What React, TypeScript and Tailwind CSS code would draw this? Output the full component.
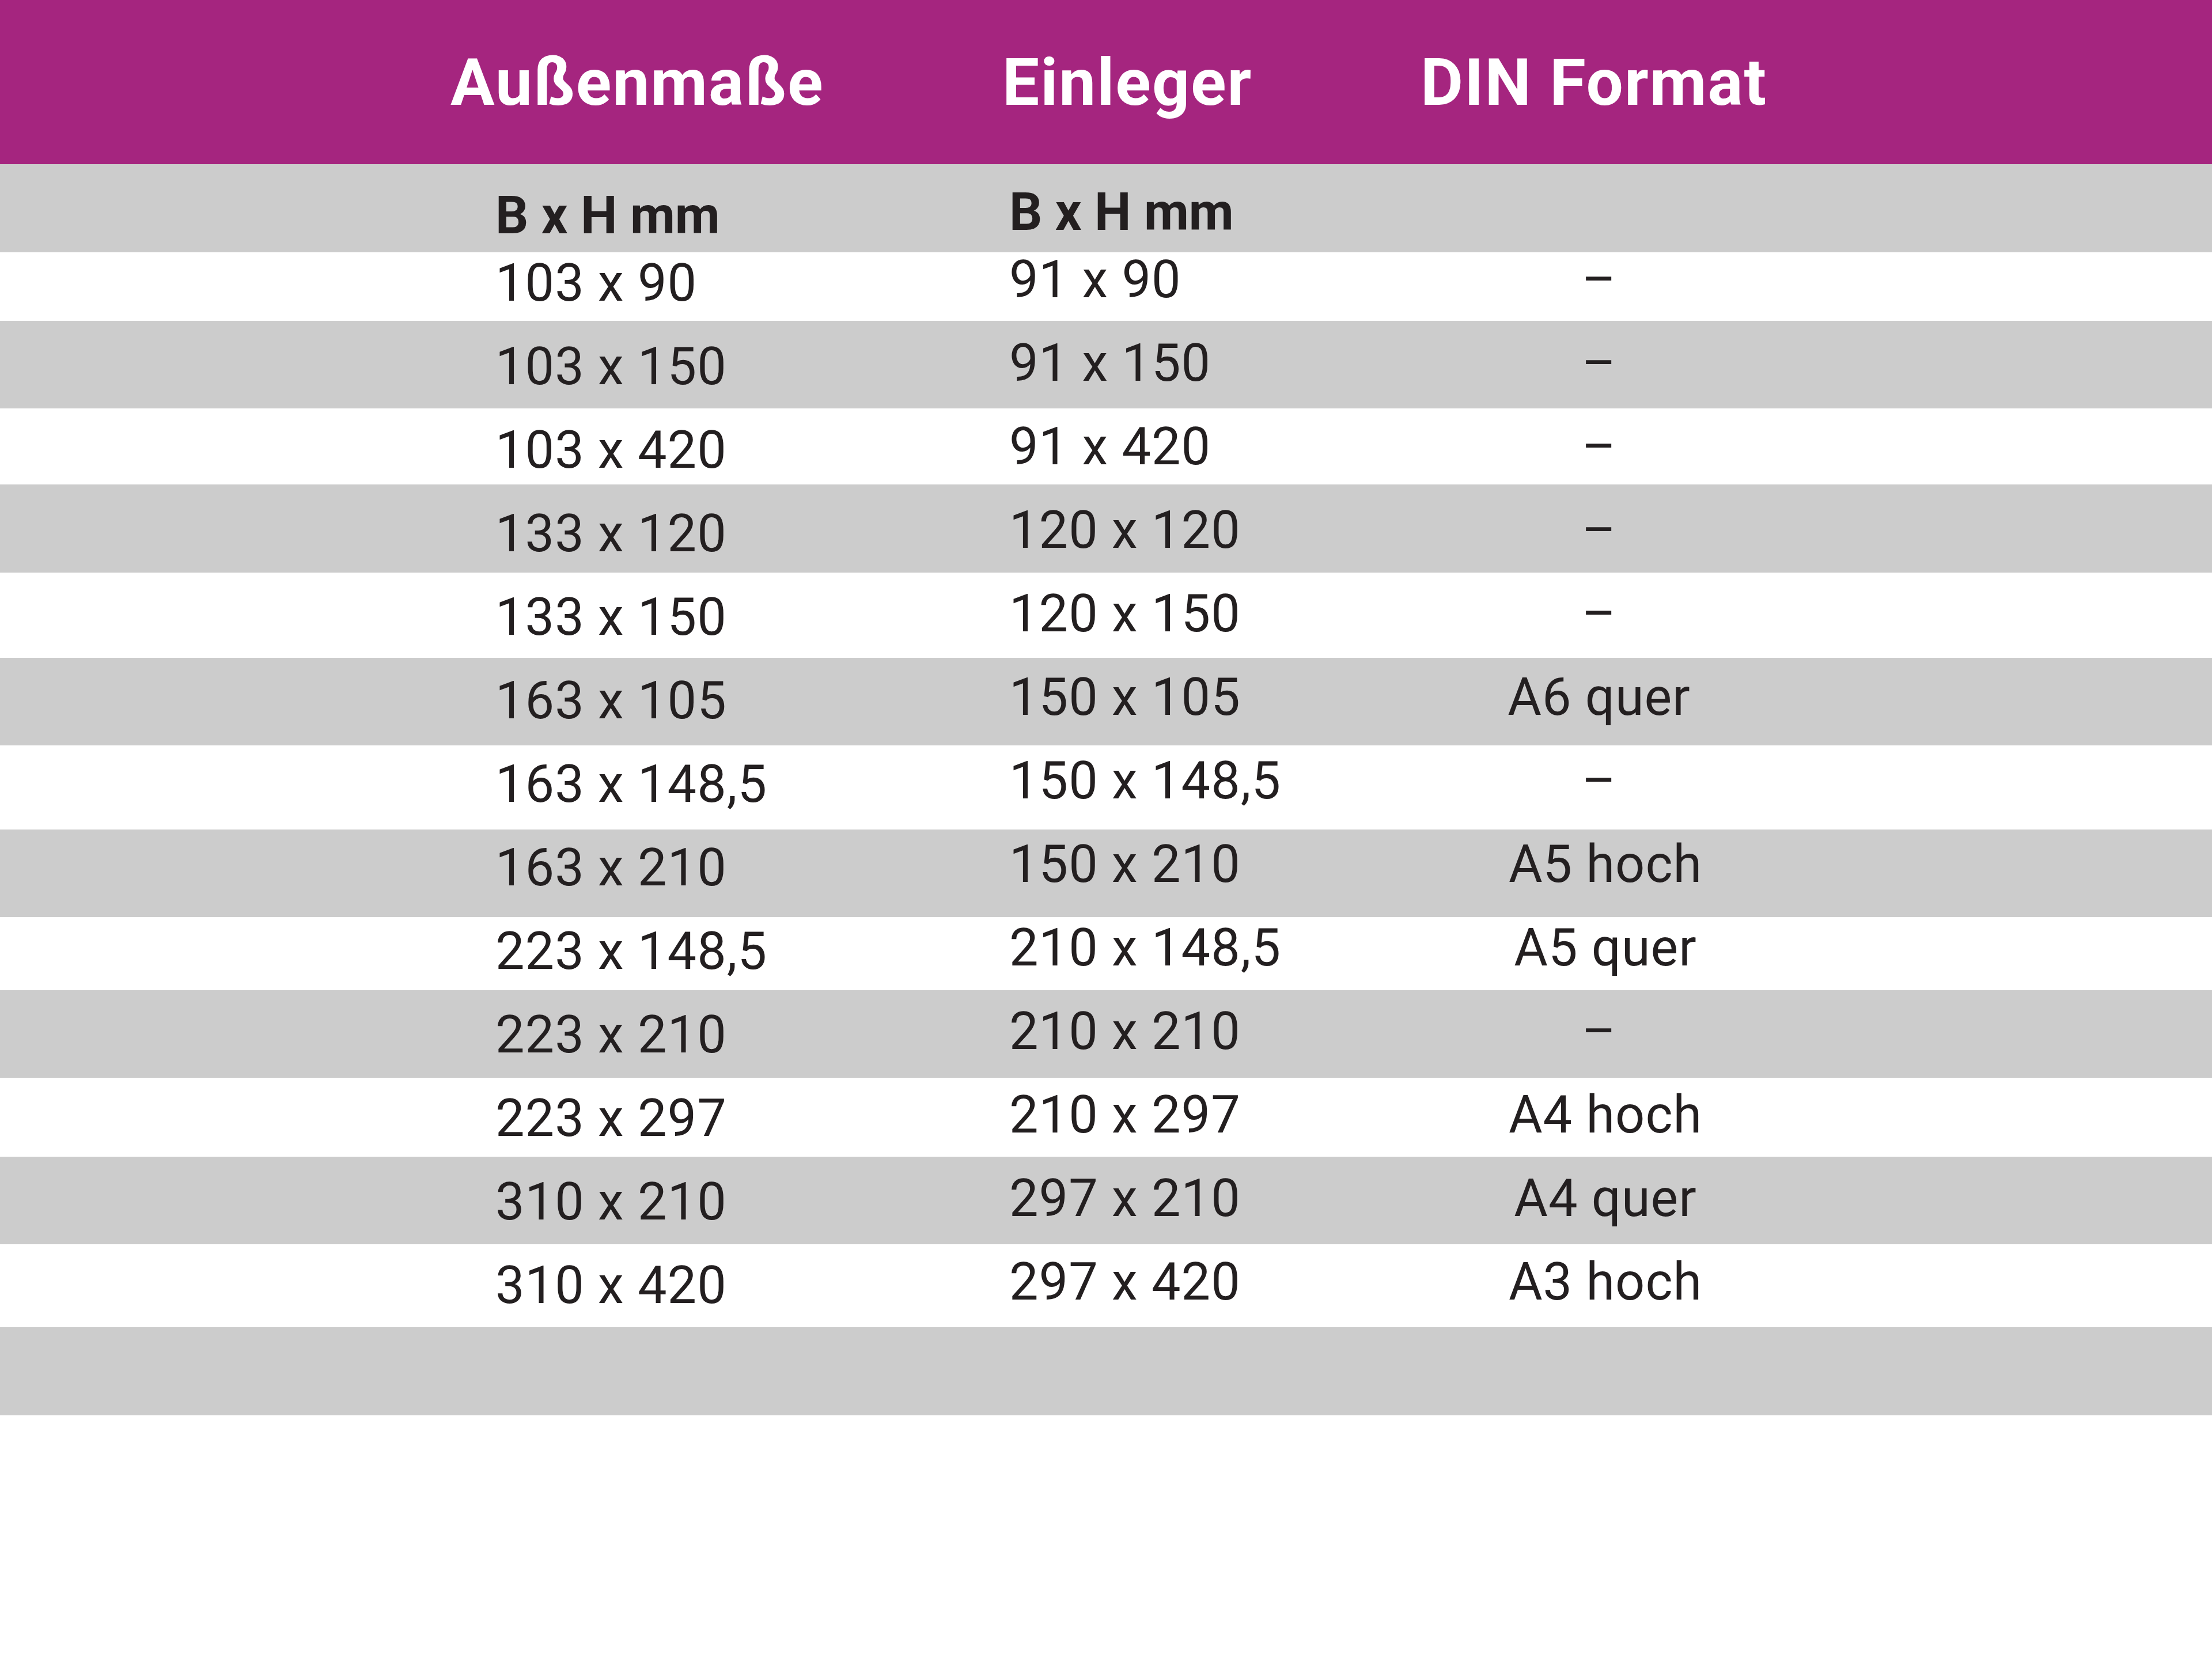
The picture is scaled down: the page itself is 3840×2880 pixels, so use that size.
const rows = [
    { a: '103 x 90', e: '91 x 90', d: '–', bg: 'bg-white', h: 'h-[119px]', pt: 'pt-[3px]' },
    { a: '103 x 150', e: '91 x 150', d: '–', bg: 'bg-[#cccccc]', h: 'h-[152px]', pt: 'pt-[29px]' },
    { a: '103 x 420', e: '91 x 420', d: '–', bg: 'bg-white', h: 'h-[132px]', pt: 'pt-[22px]' },
    { a: '133 x 120', e: '120 x 120', d: '–', bg: 'bg-[#cccccc]', h: 'h-[153px]', pt: 'pt-[35px]' },
    { a: '133 x 150', e: '120 x 150', d: '–', bg: 'bg-white', h: 'h-[148px]', pt: 'pt-[27px]' },
    { a: '163 x 105', e: '150 x 105', d: 'A6 quer', bg: 'bg-[#cccccc]', h: 'h-[152px]', pt: 'pt-[24px]' },
    { a: '163 x 148,5', e: '150 x 148,5', d: '–', bg: 'bg-white', h: 'h-[146px]', pt: 'pt-[17px]' },
    { a: '163 x 210', e: '150 x 210', d: 'A5 hoch', bg: 'bg-[#cccccc]', h: 'h-[152px]', pt: 'pt-[16px]' },
    { a: '223 x 148,5', e: '210 x 148,5', d: 'A5 quer', bg: 'bg-white', h: 'h-[127px]', pt: 'pt-[9px]' },
    { a: '223 x 210', e: '210 x 210', d: '–', bg: 'bg-[#cccccc]', h: 'h-[152px]', pt: 'pt-[27px]' },
    { a: '223 x 297', e: '210 x 297', d: 'A4 hoch', bg: 'bg-white', h: 'h-[137px]', pt: 'pt-[20px]' },
    { a: '310 x 210', e: '297 x 210', d: 'A4 quer', bg: 'bg-[#cccccc]', h: 'h-[152px]', pt: 'pt-[28px]' },
    { a: '310 x 420', e: '297 x 420', d: 'A3 hoch', bg: 'bg-white', h: 'h-[144px]', pt: 'pt-[21px]' },
];

export default function App() {
    return (
        <div className="min-h-screen w-full bg-white text-[#231f20] font-[Roboto,'Liberation_Sans',sans-serif]">
            {/* Title bar */}
            <div className="flex h-[285px] bg-[#a5257f] pl-[782px] pt-[86px] text-[114px] leading-none font-bold tracking-[2px] text-white">
                <div className="w-[958px]">Außenmaße</div>
                <div className="w-[726px]">Einleger</div>
                <div>DIN Format</div>
            </div>

            {/* Unit row */}
            <div className="flex h-[153px] bg-[#cccccc] pl-[860px] pt-[39px] text-[90px] leading-none font-bold">
                <div className="w-[892px] mt-[6px]">B x H mm</div>
                <div className="w-[724px]">B x H mm</div>
                <div className="w-[600px]"></div>
            </div>

            {rows.map((r) => (
                <div key={r.a} className={`flex ${r.bg} ${r.h} ${r.pt} pl-[860px] text-[90px] leading-none tracking-[1px]`}>
                    <div className="w-[892px] mt-[6px] whitespace-nowrap">{r.a}</div>
                    <div className="w-[724px] whitespace-nowrap">{r.e}</div>
                    <div className={`w-[600px] text-center whitespace-nowrap ${r.d.length > 1 && r.d !== 'A6 quer' ? 'pl-[22px]' : ''}`}>{r.d}</div>
                </div>
            ))}

            <div className="h-[153px] bg-[#cccccc]"></div>
        </div>
    );
}
